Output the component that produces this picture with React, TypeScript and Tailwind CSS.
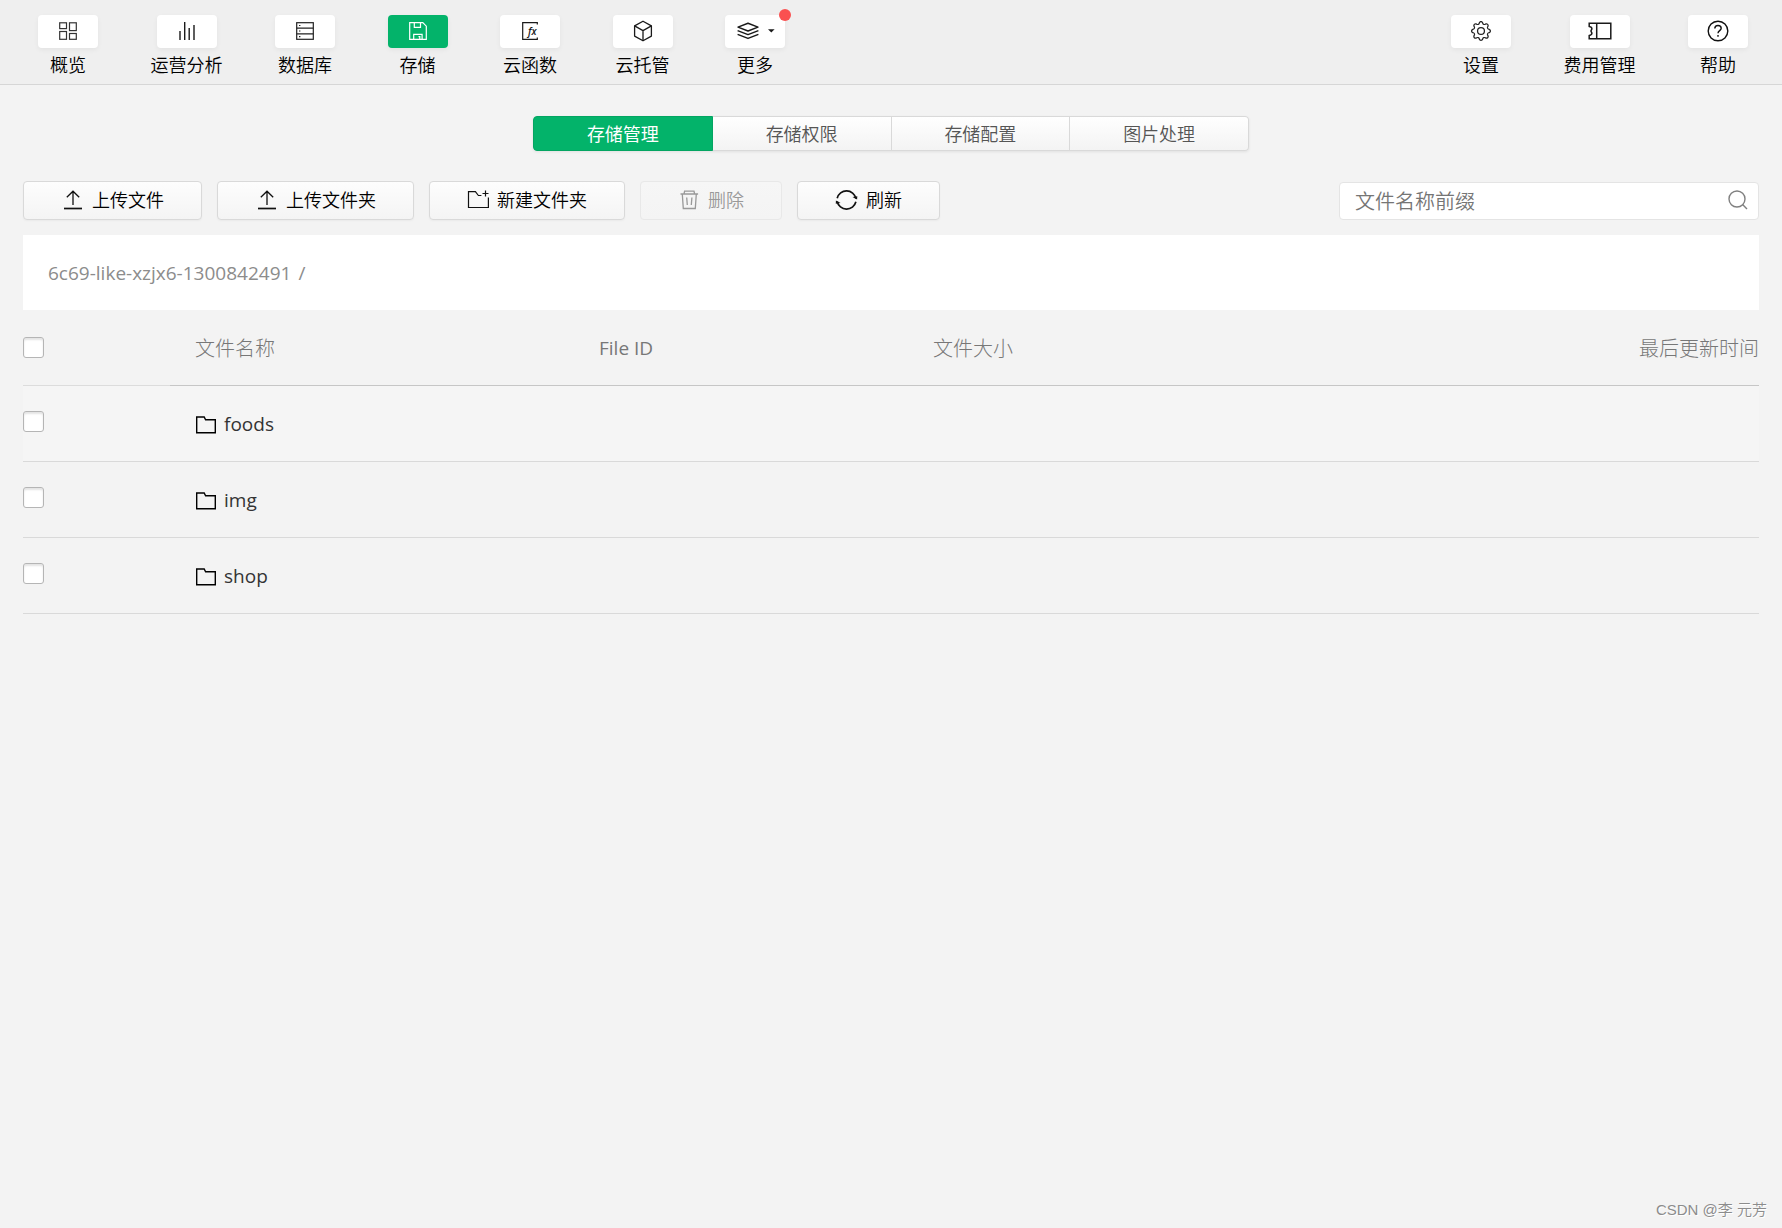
import React, { useState } from 'react';
import { BsGear } from 'react-icons/bs';

interface NavItem {
    key: string;
    label: string;
    icon: React.ReactNode;
    badge?: boolean;
}

interface ToolButton {
    label: string;
    icon: React.ReactNode;
    disabled?: boolean;
}

const OverviewIcon = () => (
    <svg width="18" height="18" viewBox="0 0 18 18" fill="none" stroke="#333" strokeWidth="1.2">
        <rect x="0.7" y="0.8" width="6.8" height="5.8" />
        <rect x="10.5" y="0.8" width="6.8" height="7.8" />
        <rect x="0.7" y="9.5" width="6.8" height="7.8" />
        <rect x="10.5" y="11.5" width="6.8" height="5.8" />
    </svg>
);

const ChartIcon = () => (
    <svg width="18" height="18" viewBox="0 0 18 18" fill="none" stroke="#1a1a1a" strokeWidth="1.4">
        <path d="M2 9v9M6.7 0v18M11.2 6v12M16 3v15" />
    </svg>
);

const DatabaseIcon = () => (
    <svg width="18" height="18" viewBox="0 0 18 18" fill="none" stroke="#222" strokeWidth="1.2">
        <rect x="0.7" y="0.7" width="16.6" height="16.6" />
        <path d="M0.7 6.2h16.6M0.7 11.8h16.6" />
        <path d="M3 3.5h1.4M3 9h1.4M3 14.6h1.4" />
    </svg>
);

const StorageIcon = () => (
    <svg width="18" height="18" viewBox="0 0 18 18" fill="none" stroke="currentColor" strokeWidth="1.2">
        <path d="M0.7 0.7h13.1l3.5 3.5v13.1H0.7z" />
        <path d="M5.3 0.7v4.6h6.2V0.7" />
        <path d="M4.7 17.3v-5h8.4v5M9.5 14.7h1.3v2.4" />
    </svg>
);

const FunctionIcon = () => (
    <svg width="18" height="18" viewBox="0 0 18 18" fill="none" stroke="#1a1a1a" strokeWidth="1.2">
        <path d="M16.3 2.4V0.7H1.7v16.6h14.6v-1.7" />
        <text x="7" y="12.6" fontSize="10" fontStyle="italic" fontWeight="600" fill="#1a1a1a" stroke="none">
            fx
        </text>
    </svg>
);

const CubeIcon = () => (
    <svg width="20" height="22" viewBox="0 0 20 22" fill="none" stroke="#1a1a1a" strokeWidth="1.3" strokeLinejoin="round">
        <path d="M10 1.2l8.4 4.7v10.2L10 20.8l-8.4-4.7V5.9z" />
        <path d="M1.6 5.9L10 10.6l8.4-4.7M10 10.6v10.2" />
    </svg>
);

const LayersIcon = () => (
    <svg width="46" height="18" viewBox="-5 0 46 18" fill="none" stroke="#1a1a1a" strokeWidth="1.5" strokeLinejoin="round">
        <path d="M11 1.2l10 3.9-10 3.9-10-3.9z" />
        <path d="M0.6 8.6l10.4 4 10.4-4M0.6 12.4l10.4 4 10.4-4" />
        <path d="M31 7.3h6.6L34.3 10.5z" fill="#1a1a1a" stroke="none" />
    </svg>
);

const TicketIcon = () => (
    <svg width="24" height="18" viewBox="0 0 24 18" fill="none" stroke="#1a1a1a" strokeWidth="1.5">
        <path d="M1.2 1.3h21.6v15.4H1.2v-3.2c1.5-.3 2.7-1 2.7-2.200 0-1-.9-1.400-.9-2.300s.9-1.300.9-2.300c0-1.200-1.200-1.900-2.700-2.200z" />
        <path d="M8.7 1.3v15.4" />
    </svg>
);

const HelpIcon = () => (
    <svg width="22" height="22" viewBox="0 0 22 22" fill="none" stroke="#111" strokeWidth="1.4">
        <circle cx="11" cy="11" r="9.8" />
        <path d="M7.8 8.6c0-2 1.4-3.1 3.2-3.1s3.2 1.1 3.2 2.8c0 2.3-3.2 2.4-3.2 5" />
        <path d="M11 15v1.8" />
    </svg>
);

const UploadIcon = () => (
    <svg width="23" height="22" viewBox="0 0 23 22" fill="none" stroke="#111" strokeWidth="1.3">
        <path d="M12 16V2.4M5.8 8.3L12 2.2l6.2 6.1" />
        <path d="M3 19.5h18" strokeWidth="1.7" />
    </svg>
);

const NewFolderIcon = () => (
    <svg width="22" height="22" viewBox="0 0 22 22" fill="none" stroke="#111" strokeWidth="1.2">
        <path d="M14.4 6.5h-3L8.400 2.600H1.500v15.900h19.900V8.500" />
        <path d="M18.500 1.500v6M15.500 4.500h6" />
    </svg>
);

const TrashIcon = () => (
    <svg width="22" height="22" viewBox="0 0 22 22" fill="none" stroke="currentColor" strokeWidth="1.3">
        <path d="M2.5 5h17.600M6 5l.6-2.800h9.400L16.600 5" />
        <path d="M4.300 5l1 14.500h12l1-14.500" />
        <path d="M8.700 8.500l.6 7.500M13.900 8.500l-.6 7.500" />
    </svg>
);

const RefreshIcon = () => (
    <svg width="23" height="22" viewBox="0 0 23 22" fill="none" stroke="#111" strokeWidth="1.7">
        <path d="M2.2 9.2a9.6 9.6 0 0 1 18.7.3" />
        <path d="M20.9 12.8a9.6 9.6 0 0 1-18.7-.3" />
        <path d="M17.5 8l4.6 2.6.2-3.4zM5.6 14l-4.7-2.6-.1 3.3z" fill="#111" stroke="none" />
    </svg>
);

const SearchIcon = () => (
    <svg width="20" height="20" viewBox="0 0 20 20" fill="none" stroke="#808080" strokeWidth="1.4" className="mb-0.5">
        <circle cx="9" cy="9" r="8" />
        <path d="M14.6 14.6l4.4 4.4" />
    </svg>
);

const FolderIcon = () => (
    <svg width="22" height="18" viewBox="0 0 22 18" fill="none" stroke="#000" strokeWidth="1.4" className="shrink-0">
        <path d="M1.7 1h7.5l1.4 2.8h9.7v12.9H1.7z" />
    </svg>
);

const mainNav: NavItem[] = [
    { key: 'overview', label: '概览', icon: <OverviewIcon /> },
    { key: 'analysis', label: '运营分析', icon: <ChartIcon /> },
    { key: 'database', label: '数据库', icon: <DatabaseIcon /> },
    { key: 'storage', label: '存储', icon: <StorageIcon /> },
    { key: 'function', label: '云函数', icon: <FunctionIcon /> },
    { key: 'hosting', label: '云托管', icon: <CubeIcon /> },
    { key: 'more', label: '更多', icon: <LayersIcon />, badge: true },
];

const sideNav: NavItem[] = [
    { key: 'settings', label: '设置', icon: <BsGear size={20} color="#222" /> },
    { key: 'billing', label: '费用管理', icon: <TicketIcon /> },
    { key: 'help', label: '帮助', icon: <HelpIcon /> },
];

const tabs = ['存储管理', '存储权限', '存储配置', '图片处理'];

const toolButtons: ToolButton[] = [
    { label: '上传文件', icon: <UploadIcon /> },
    { label: '上传文件夹', icon: <UploadIcon /> },
    { label: '新建文件夹', icon: <NewFolderIcon /> },
    { label: '删除', icon: <TrashIcon />, disabled: true },
    { label: '刷新', icon: <RefreshIcon /> },
];

const folders = ['foods', 'img', 'shop'];

const checkboxClass =
    'block size-[21px] appearance-none rounded-[3px] border border-[#b5b5b5] bg-white shadow-[inset_0_2px_2px_#e4e4e4] checked:bg-[#03b36a]';

const NavButton: React.FC<{ item: NavItem; active: boolean; onClick: () => void }> = ({ item, active, onClick }) => (
    <button type="button" onClick={onClick} className="flex flex-col items-center text-lg leading-6 text-black">
        <span
            className={`relative flex h-[33px] w-[60px] items-center justify-center rounded-[4px] pb-px shadow-[0_2px_5px_rgba(0,0,0,0.05)] ${
                active ? 'bg-[#03b36a] text-white' : 'bg-white'
            }`}
        >
            {item.icon}
            {item.badge && <span className="absolute -top-1.5 -right-1.5 size-3 rounded-full bg-[#fa5151]" />}
        </span>
        <span className="mt-[5px]">{item.label}</span>
    </button>
);

const App: React.FC = () => {
    const [activeNav, setActiveNav] = useState('storage');
    const [activeTab, setActiveTab] = useState(tabs[0]);
    const [keyword, setKeyword] = useState('');
    const [selected, setSelected] = useState<string[]>([]);

    const toggleFolder = (name: string) => {
        setSelected((prev) => (prev.includes(name) ? prev.filter((n) => n !== name) : [...prev, name]));
    };

    const toggleAll = () => {
        setSelected((prev) => (prev.length === folders.length ? [] : folders));
    };

    return (
        <div className="flex min-h-screen flex-col bg-[#f3f3f3] font-['Open_Sans','Noto_Sans_CJK_SC',sans-serif] font-[350]">
            <header className="flex justify-between border-b border-[#d6d6d6] bg-[#efefef] pt-[15px] pr-[34px] pb-[7px] pl-[38px]">
                <nav className="flex w-[747px] justify-between">
                    {mainNav.map((item) => (
                        <NavButton key={item.key} item={item} active={activeNav === item.key} onClick={() => setActiveNav(item.key)} />
                    ))}
                </nav>
                <nav className="flex w-[297px] justify-between">
                    {sideNav.map((item) => (
                        <NavButton key={item.key} item={item} active={activeNav === item.key} onClick={() => setActiveNav(item.key)} />
                    ))}
                </nav>
            </header>

            <main className="px-[23px] pt-[31px]">
                <div className="mx-auto flex h-[35px] max-w-[716px] rounded-[4px] bg-linear-to-b from-white to-[#f3f3f3] text-lg shadow-[0_1px_3px_rgba(0,0,0,0.08)]">
                    {tabs.map((tab) => (
                        <button
                            key={tab}
                            type="button"
                            aria-pressed={activeTab === tab}
                            onClick={() => setActiveTab(tab)}
                            className={`flex-1 border-y border-r first:rounded-l-[4px] first:border-l last:rounded-r-[4px] ${
                                activeTab === tab ? 'border-[#03a562] bg-[#03b36a] font-normal text-white' : 'border-[#d9d9d9] text-[#555]'
                            }`}
                        >
                            {tab}
                        </button>
                    ))}
                </div>

                <div className="mt-[30px] flex items-center justify-between">
                    <div className="flex gap-[15px]">
                        {toolButtons.map((btn) => (
                            <button
                                key={btn.label}
                                type="button"
                                disabled={btn.disabled}
                                className="flex h-[39px] items-center gap-2 rounded-[4px] border border-[#d9d9d9] bg-linear-to-b from-[#fdfdfd] to-[#f4f4f4] px-[37px] pb-0.5 text-lg text-black shadow-[0_1px_2px_rgba(0,0,0,0.04)] disabled:border-[#e8e8e8] disabled:from-[#f6f6f6] disabled:text-[#999] disabled:shadow-none"
                            >
                                {btn.icon}
                                {btn.label}
                            </button>
                        ))}
                    </div>
                    <label className="flex h-[38px] w-[420px] items-center rounded-[4px] border border-[#e4e4e4] bg-white pr-[10px] pl-[15px]">
                        <input
                            type="text"
                            value={keyword}
                            onChange={(e) => setKeyword(e.target.value)}
                            placeholder="文件名称前缀"
                            aria-label="文件名称前缀"
                            className="h-full min-w-0 flex-1 pt-0.5 text-xl text-[#333] outline-none placeholder:text-[#757575]"
                        />
                        <SearchIcon />
                    </label>
                </div>

                <div className="mt-[15px] flex h-[75px] items-center gap-[7px] bg-white px-[25px] pt-0.5 text-[19px] font-normal text-[#8c8c8c]">
                    <a href="#root">6c69-like-xzjx6-1300842491</a>
                    <span>/</span>
                </div>

                <table className="w-full table-fixed border-separate border-spacing-0 text-left">
                    <thead>
                        <tr className="h-[76px] text-xl text-[#777]">
                            <th className="w-[147px] border-b border-[#dcdcdc]">
                                <input
                                    type="checkbox"
                                    aria-label="全选"
                                    checked={selected.length === folders.length}
                                    onChange={toggleAll}
                                    className={checkboxClass}
                                />
                            </th>
                            <th className="w-[404px] border-b border-[#c6c6c6] pt-0.5 pl-[25px] font-light">文件名称</th>
                            <th className="w-[334px] border-b border-[#c6c6c6] pt-0.5 pl-[25px] text-[19px] font-medium">File ID</th>
                            <th className="w-[334px] border-b border-[#c6c6c6] pt-0.5 pl-[25px] font-light">文件大小</th>
                            <th className="border-b border-[#c6c6c6] pt-0.5 text-right font-light">最后更新时间</th>
                        </tr>
                    </thead>
                    <tbody>
                        {folders.map((name) => (
                            <tr key={name} className="h-[76px] first:bg-[#f5f5f5]">
                                <td className="border-b border-[#d9d9d9] pb-1">
                                    <input
                                        type="checkbox"
                                        aria-label={name}
                                        checked={selected.includes(name)}
                                        onChange={() => toggleFolder(name)}
                                        className={checkboxClass}
                                    />
                                </td>
                                <td className="border-b border-[#d9d9d9] pt-0.5 pl-[25px]">
                                    <a href="#root" className="flex items-center gap-[7px] text-[19px] font-normal text-[#333]">
                                        <FolderIcon />
                                        {name}
                                    </a>
                                </td>
                                <td className="border-b border-[#d9d9d9]" />
                                <td className="border-b border-[#d9d9d9]" />
                                <td className="border-b border-[#d9d9d9]" />
                            </tr>
                        ))}
                    </tbody>
                </table>
            </main>

            <footer className="mt-auto pr-[15px] pb-1.5 text-right font-['Liberation_Sans','Noto_Sans_CJK_SC',sans-serif] text-[15px] leading-6 text-[#8c8c8c] [text-shadow:1px_1px_0_#fff]">
                CSDN @李 元芳
            </footer>
        </div>
    );
};

export default App;
